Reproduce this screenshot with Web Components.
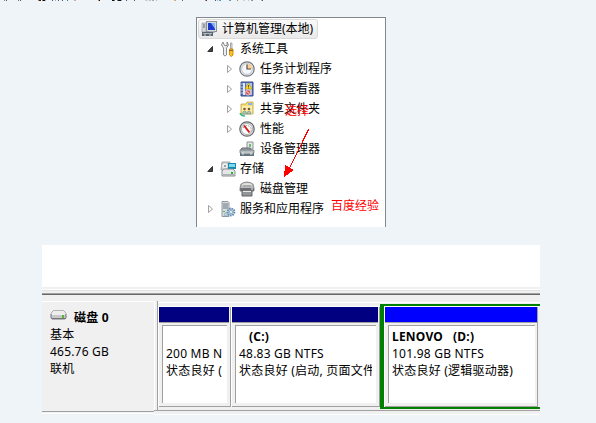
<!DOCTYPE html>
<html lang="zh-CN"><head><meta charset="utf-8"><title>计算机管理</title>
<style>
html,body{margin:0;width:596px;height:423px;overflow:hidden;background:#eff4f9}
body{font:12px "Noto Sans","Noto Sans CJK SC",sans-serif;color:#000}
</style></head><body>
<manage-page></manage-page>
<script>
const define=(name,html,init)=>customElements.define(name,class extends HTMLElement{
  constructor(){super();const t=document.createElement('template');t.innerHTML=html;
    this.attachShadow({mode:'open'}).append(t.content.cloneNode(true));}
  connectedCallback(){if(init)init(this,this.shadowRoot);}
});
const icons={
computer:`<rect x="5.5" y=".5" width="10" height="10" fill="#d9dde3" stroke="#8c929d"/><path d="M7 2h7v7H7z" fill="#2038c8"/><path d="M10 2h4v6z" fill="#7db6f4"/><path d="M1 2h4v9H1z" fill="#d5d8dc" stroke="#929aa5" stroke-width=".7"/><path d="M2 4h2M2 6h2" stroke="#666"/><path d="M8 10h5l1 2H7z" fill="#a6abb3"/><path d="M1 11h11v4H1z" fill="#59646d"/><path d="M2 12h9v1H2z" fill="#a9babc"/><path d="M4 13v2M9 13v2" stroke="#d6d6d6"/>`,
tools:`<path d="M3 1 1.5 4l2 3v7q1.500 2 3 0V7l2-3L7 1v3.500H4.500z" fill="#eceef0" stroke="#6c7075" stroke-width=".8"/><path d="M10.500 2h1.500v6h-1.500z" fill="#e3e5e5" stroke="#777" stroke-width=".6"/><path d="M9.500 8h3.500v6q-1.700 3-3.500 0z" fill="#ffc31c" stroke="#bd7b0e" stroke-width=".8"/><path d="M9 9.500h4" stroke="#8f6315"/>`,
clock:`<circle cx="8" cy="8" r="7.2" fill="#e9edf4" stroke="#74777b" stroke-width="1.2"/><circle cx="8" cy="8" r="5.4" fill="#f5f8ff" stroke="#b4b6bb" stroke-width=".8"/><path d="M8 8V2.700A5.300 5.300 0 0 1 13.200 8z" fill="#ffd08a"/><path d="M8 3.500V8h4" fill="none" stroke="#4c4c55" stroke-width="1.200"/>`,
event:`<path d="M2 1h12v14H2z" fill="#526fba" stroke="#394f8c"/><path d="M4 2h2v12H4z" fill="#dfe8fa"/><path d="M7 2h6v12H7z" fill="#a8c1ee"/><path d="M1 3h3M1 6h3M1 9h3M1 12h3" stroke="#c0c6d1"/><path d="m9.500 2 3.600 6H6z" fill="#ffdb18" stroke="#b99311" stroke-width=".6"/><path d="M9.500 4v2M9.500 6.500v1" stroke="#555"/><circle cx="9" cy="11.500" r="2.700" fill="#d7524c" stroke="#fff" stroke-width=".6"/><path d="m7.800 10.300 2.400 2.400" stroke="#fff"/>`,
share:`<path d="M2 3h5l1-2h6v12H2z" fill="#f8dd79" stroke="#c3a146" stroke-width=".8"/><path d="M3 5h10v8H3z" fill="#ffefaa"/><path d="M9 2h4v2H9z" fill="#82b7e5"/><circle cx="5.500" cy="8" r="1.300" fill="#7a5a3a"/><circle cx="10" cy="8" r="1.300" fill="#7a5a3a"/><path d="M3.500 13q0-3 2-3t2 3zM8 13q0-3 2-3t2 3z" fill="#a9c9b3" stroke="#657f72" stroke-width=".5"/><path d="M1 12q1 3 5 3" fill="none" stroke="#35b98e" stroke-width="1.500"/>`,
perf:`<circle cx="8" cy="8" r="7.2" fill="#e6e8e9" stroke="#63676b" stroke-width="1.2"/><circle cx="8" cy="8" r="5.500" fill="#fff" stroke="#999" stroke-width=".8"/><path d="M4 7q4-5 8 0v4" fill="none" stroke="#666" stroke-width=".8" stroke-dasharray="1 1"/><path d="m5 4.500 5.500 7" stroke="#d71818" stroke-width="2"/>`,
device:`<path d="M8 1h6v7H8z" fill="#e3e7e8" stroke="#8c9497"/><path d="M11 3v3" stroke="#4aac48" stroke-width="1.500"/><path d="M3 7h8l2 3H1z" fill="#9aa3a8" stroke="#626b70"/><path d="M1 9h14v3H1z" fill="#b4bdc1" stroke="#69737a" stroke-width=".7"/><path d="M1 12h14v3H1z" fill="#66747b"/><path d="M2 12h12" stroke="#dee4e6"/><path d="M4 11v3M12 11v3" stroke="#e0e4e5"/>`,
storage:`<path d="M2 1h8v8H1z" fill="#d2d5d7" stroke="#a3a7aa"/><circle cx="5" cy="5" r="3.500" fill="#eceeed" stroke="#9da1a4" stroke-width=".7"/><circle cx="5" cy="5" r="1" fill="#888"/><path d="M8 2h8v6H8z" fill="#128bb2"/><path d="M9 3h6v3H9z" fill="#84d6ed"/><path d="m2 10 2-2h9l2 2v5H2z" fill="#e4e6e7" stroke="#80868a" stroke-width=".9"/><path d="M3 13h11v2H3z" fill="#abb1b5"/><path d="M11 11h2v2h-2z" fill="#24b734"/>`,
disk:`<path d="M2 3q6-4 12 0l1 4v3H1V7z" fill="#b8bbbd" stroke="#777" stroke-width=".8"/><path d="M3 3q5-2 10 0l-1 3H4z" fill="#dfe1df"/><path d="M1 7h14v3H1z" fill="#707476"/><path d="M3 9h10v6H3z" fill="#929698" stroke="#5e6264"/><path d="M4 10h8v1H4z" fill="#e7e7e7"/><path d="M4 5h8" stroke="#777"/><path d="M12 8h2" stroke="#e4e4e4"/>`,
services:`<path d="M2 .500h6l1 1v14H2z" fill="#d6dce0" stroke="#8f9aa2"/><path d="M3 3h5M3 5h5M3 7h5" stroke="#6d7880"/><path d="M3 10h2v1H3z" fill="#47bd4d"/><circle cx="11" cy="11" r="3.400" fill="#c1dbeb" stroke="#638db0" stroke-width="2" stroke-dasharray="1.500 .800"/><circle cx="11" cy="11" r="1.500" fill="#fff" stroke="#718fa7" stroke-width=".7"/><circle cx="6" cy="13.500" r="1.600" fill="#c8dce7" stroke="#7c9bb0" stroke-width=".7"/>`
};
define('tree-node',`<style>
:host{display:flex;align-items:center;height:20px;box-sizing:border-box;white-space:nowrap}
:host([level="0"]){width:120px;margin-left:1px;padding-left:2px;border:1px solid #dadada;border-radius:3px;background:linear-gradient(#fafafa,#e9e9e9)}
:host([level="1"]){padding-left:9px}:host([level="2"]){padding-left:28px}
.arrow{width:9px;height:10px;flex:none;margin-right:5px}.icon{width:16px;height:16px;flex:none}
:host([level="2"]) .icon{margin-right:1px}
:host([level="0"]) .arrow{display:none}.label{line-height:18px;margin-left:4px}
:host([level="0"]) .label{margin-left:5px}
</style><svg class="arrow" viewBox="0 0 9 10"></svg><svg class="icon" viewBox="0 0 16 16"></svg><span class="label"><slot></slot></span>`,(h,r)=>{
 const s=h.getAttribute('state');
 r.querySelector('.arrow').innerHTML=s==='open'?'<path d="M6.500 2.500v5H1.800z" fill="#404040" stroke="#333"/>':s==='closed'?'<path d="M2.500 1.500v7l4-3.500z" fill="#fff" stroke="#a1a1a1"/>':'';
 r.querySelector('.icon').innerHTML=icons[h.getAttribute('icon')];
});
define('console-tree',`<style>
:host{display:block;box-sizing:border-box;width:190px;height:210px;border:1px solid #82868d;border-bottom:0;background:#fff;padding-top:1px;position:relative}
.note{position:absolute;color:#f00;line-height:18px;white-space:nowrap}.select{left:88px;top:84px}.brand{left:134px;top:179px}
.pointer{position:absolute;left:85px;top:110px}
</style><slot></slot><span class="note select">选择</span><svg class="pointer" width="30" height="50" shape-rendering="crispEdges"><path d="M26.500 1.500 7 41" stroke="#f00"/><path d="M2 49 3 37l9 5z" fill="#f00"/></svg><span class="note brand">百度经验</span>`);
define('disk-info',`<style>
:host{display:block;box-sizing:border-box;width:112px;height:110px;padding:7px 0 0 8px;background:#f0f0f0;border-top:1px solid #fff;line-height:17px;letter-spacing:.2px}
.name{display:flex;align-items:center;font-weight:bold}.name svg{margin-right:7px;margin-top:-5px}
</style><div class="name"><svg width="17" height="12"><path d="m1 5 2-3h11l2 3v4l-1 1H2L1 9z" fill="#c8c8ca" stroke="#77777c"/><path d="M3 2h11l2 3H1z" fill="#ededee"/><path d="M2 5.500h13" stroke="#eee"/><path d="M2 9.500h13" stroke="#77777c"/><path d="M13 6v3" stroke="#55b82e" stroke-width="2"/></svg><slot name="name"></slot></div><slot></slot>`);
define('disk-volume',`<style>
:host{display:block;box-sizing:border-box;height:101px;margin-top:4px;border:solid #fff;border-width:1px 0 0 1px;box-shadow:inset -1px -1px #a0a0a0;background:#f0f0f0}
.bar{height:15px;background:var(--bar,#000080);border-bottom:1px solid #a0a0a0;margin-right:2px}
.box{box-sizing:border-box;height:78px;margin:2px 4px 0 3px;border:solid #a0a0a0;border-width:1px 0 0 1px;background:#fff;padding:2px 4px 0 3px;line-height:17px;white-space:pre;letter-spacing:.22px}
.clip{overflow:hidden;height:66px}
.name{height:17px;font-weight:bold}
:host([selected]){height:105px;margin-top:2px;border:solid green;border-width:2px 0 2px 4px;padding:1px 0 0 1px;box-shadow:inset 1px 1px #fff}
:host([selected]) .body{height:100px;box-sizing:border-box;border-right:1px solid #a0a0a0;border-bottom:1px solid #a0a0a0;margin-right:2px}
:host([selected]) .bar{margin-right:0}:host([selected]) .box{margin-right:2px}
</style><div class="body"><div class="bar"></div><div class="box"><div class="clip"><div class="name"><slot name="name"></slot></div><slot></slot></div></div></div>`);
define('disk-view',`<style>
:host{display:block;width:498px;height:170px;background:#f0f0f0;overflow:hidden}
.list{height:42px;background:#fff}
.split{height:14px;background:linear-gradient(#f0f0f0 0 2px,#fff 2px 3px,#e3e3e3 3px 4px,#f0f0f0 4px 6px,#a0a0a0 6px 7px,#696969 7px 8px,#f0f0f0 8px)}
.row{display:flex;align-items:flex-start;height:109px}
.gap{width:4px;height:109px;box-sizing:border-box;border-left:1px solid #fff;background:linear-gradient(90deg,#f0f0f0 0 2px,#a0a0a0 2px);flex:none}
.vols{width:382px;flex:none;height:109px;background:linear-gradient(#f0f0f0 1px,#fff 1px 2px,#f0f0f0 2px);display:flex;align-items:flex-start}
.vols{box-sizing:border-box;padding-top:1px}
.end{height:5px;background:linear-gradient(#a0a0a0 0 1px,#f0f0f0 1px 4px,#fff 4px);margin-left:112px}
.endleft{width:112px;height:5px;margin-top:-5px;background:linear-gradient(#f0f0f0 0 1px,#a0a0a0 1px 2px,#f0f0f0 2px 3px,#fff 3px 4px,#f0f0f0 4px)}
</style><div class="list"></div><div class="split"></div><div class="row"><slot name="disk"></slot><div class="gap"></div><div class="vols"><slot></slot></div></div><div class="end"></div><div class="endleft"></div>`);
define('cut-line',`<style>:host{display:block;height:1px;overflow:hidden}svg{display:block}</style><svg width="596" height="1"></svg>`,(h,r)=>{
 const m=[[4,1,'#888'],[6,1,'#557'],[18,1,'#777'],[20,1,'#557'],[38,1,'#c84'],[39,2,'#223'],[42,1,'#a64'],[43,2,'#111'],[45,1,'#9bd'],[52,1,'#557'],[55,1,'#aab'],[58,1,'#656'],[62,1,'#557'],[67,1,'#479'],[74,2,'#caa'],[98,1,'#c84'],[99,1,'#112'],[112,2,'#111'],[114,1,'#57a'],[117,1,'#c73'],[118,3,'#111'],[121,1,'#8ac'],[126,1,'#557'],[134,1,'#557'],[145,3,'#ccd4cf'],[149,2,'#bbc4cb'],[152,2,'#aaa'],[156,1,'#bbb'],[174,2,'#ca8'],[182,1,'#667'],[205,1,'#c84'],[206,1,'#337'],[215,1,'#557'],[217,1,'#8bd'],[219,2,'#59b'],[229,2,'#69b'],[237,1,'#986'],[243,2,'#bdd7ea'],[248,1,'#cbd'],[251,1,'#c96'],[252,1,'#59b'],[261,1,'#bac'],[262,1,'#557']];
 r.querySelector('svg').innerHTML=m.map(([x,w,c])=>`<rect x="${x}" width="${w}" height="1" fill="${c}"/>`).join('');
});
define('manage-page',`<style>
:host{display:block}console-tree{margin:16px 0 0 196px}disk-view{margin:18px 0 0 42px}
disk-volume{flex:none}.v1{width:73px}.v2{width:149px}.v3{width:160px;--bar:#00f}
</style><cut-line></cut-line>
<console-tree><tree-node level="0" icon="computer">计算机管理(本地)</tree-node><tree-node level="1" state="open" icon="tools">系统工具</tree-node><tree-node level="2" state="closed" icon="clock">任务计划程序</tree-node><tree-node level="2" state="closed" icon="event">事件查看器</tree-node><tree-node level="2" state="closed" icon="share">共享文件夹</tree-node><tree-node level="2" state="closed" icon="perf">性能</tree-node><tree-node level="2" icon="device">设备管理器</tree-node><tree-node level="1" state="open" icon="storage">存储</tree-node><tree-node level="2" icon="disk">磁盘管理</tree-node><tree-node level="1" state="closed" icon="services">服务和应用程序</tree-node></console-tree>
<disk-view><disk-info slot="disk"><span slot="name">磁盘 0</span><div>基本</div><div>465.76 GB</div><div>联机</div></disk-info>
<disk-volume class="v1"><div>200 MB N</div><div>状态良好 (</div></disk-volume>
<disk-volume class="v2"><span slot="name">&nbsp;&nbsp;&nbsp;(C:)</span><div>48.83 GB NTFS</div><div>状态良好 (启动, 页面文件</div></disk-volume>
<disk-volume class="v3" selected><span slot="name">LENOVO &nbsp;&nbsp;(D:)</span><div>101.98 GB NTFS</div><div>状态良好 (逻辑驱动器)</div></disk-volume></disk-view>`);
</script></body></html>
